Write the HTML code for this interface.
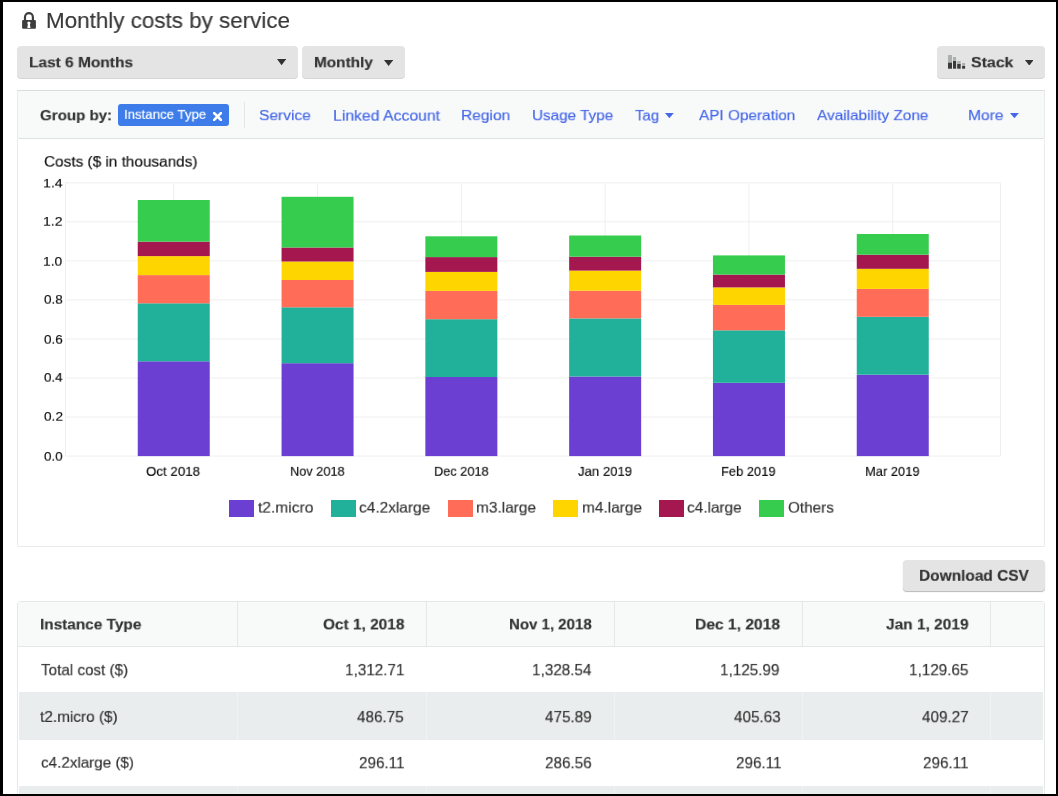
<!DOCTYPE html>
<html><head><meta charset="utf-8"><style>
html,body{margin:0;padding:0;}
body{width:1058px;height:796px;background:#000;position:relative;overflow:hidden;font-family:"Liberation Sans",sans-serif;}
#pg{position:absolute;left:3px;top:2px;width:1053px;height:792px;background:#fff;overflow:hidden;}
#wrap{position:absolute;left:-3px;top:-2px;width:1058px;height:796px;}
.t{position:absolute;line-height:1;white-space:nowrap;transform-origin:0 0;will-change:transform;-webkit-text-stroke:0.18px currentColor;}
</style></head><body><div id="pg"><div id="wrap">
<svg style="position:absolute;left:18px;top:8px" width="22" height="24" viewBox="0 0 22 24">
<path d="M7 12.5 V9.15 A3.95 3.95 0 0 1 14.9 9.15 V12.5" fill="none" stroke="#3d3d3d" stroke-width="2.2"/>
<rect x="4.1" y="12" width="13.8" height="8.8" rx="1" fill="#3d3d3d"/>
<circle cx="10.9" cy="15.0" r="1.6" fill="#fff"/><path d="M10.0 15.5 L11.8 15.5 L12.5 19.9 L9.3 19.9 Z" fill="#fff"/>
</svg>
<div class="t" id="t0" style="left:46.06px;top:10.26px;font-size:22.5px;color:#383838;transform:scale(0.9959,1.0028);">Monthly costs by service</div>
<div style="position:absolute;left:17px;top:46px;width:281px;height:32px;background:#e4e4e4;border-radius:4px;box-shadow:0 1px 0 #d3d6d6;"></div>
<div class="t" id="t1" style="left:29.06px;top:55.98px;font-size:16.0px;color:#333;font-weight:bold;transform:scale(0.9666,0.8709);">Last 6 Months</div>
<svg style="position:absolute;left:276.8px;top:59.4px" width="9.20" height="6.20" viewBox="0 0 9.20 6.20"><path d="M0 0 L9.20 0 L4.60 6.20 Z" fill="#333"/></svg>
<div style="position:absolute;left:302px;top:46px;width:103px;height:32px;background:#e4e4e4;border-radius:4px;box-shadow:0 1px 0 #d3d6d6;"></div>
<div class="t" id="t2" style="left:314.17px;top:55.98px;font-size:16.0px;color:#333;font-weight:bold;transform:scale(0.9584,0.8709);">Monthly</div>
<svg style="position:absolute;left:383.6px;top:59.6px" width="9.20" height="6.00" viewBox="0 0 9.20 6.00"><path d="M0 0 L9.20 0 L4.60 6.00 Z" fill="#333"/></svg>
<div style="position:absolute;left:937px;top:46px;width:108px;height:32px;background:#e4e4e4;border-radius:4px;box-shadow:0 1px 0 #d3d6d6;"></div>
<svg style="position:absolute;left:948px;top:55px" width="18" height="14" viewBox="0 0 18 14">
<rect x="0" y="0" width="4" height="7.6" fill="#adb1ae"/><rect x="0" y="7.6" width="4" height="6.1" fill="#3a3a3a"/>
<rect x="5" y="2" width="3.1" height="4" fill="#adb1ae"/><rect x="5" y="6" width="3.1" height="7.7" fill="#3a3a3a"/>
<rect x="9.2" y="6" width="3.5" height="3" fill="#adb1ae"/><rect x="9.2" y="9" width="3.5" height="4.7" fill="#3a3a3a"/>
<rect x="14.1" y="8" width="3" height="3" fill="#adb1ae"/><rect x="14.1" y="11" width="3" height="2.7" fill="#3a3a3a"/>
</svg>
<div class="t" id="t3" style="left:970.81px;top:56.09px;font-size:16.0px;color:#333;font-weight:bold;transform:scale(0.9917,0.8705);">Stack</div>
<svg style="position:absolute;left:1024.6px;top:59.5px" width="8.60" height="5.60" viewBox="0 0 8.60 5.60"><path d="M0 0 L8.60 0 L4.30 5.60 Z" fill="#333"/></svg>
<div style="position:absolute;left:17px;top:90px;width:1028px;height:48px;background:#f8f9f9;border:1px solid #e9ebeb;border-top-color:#d9dddd;border-bottom:none;box-sizing:border-box;"></div>
<div style="position:absolute;left:18px;top:138px;width:1026px;height:1px;background:#dde1e1;"></div>
<div class="t" id="t4" style="left:40.04px;top:108.81px;font-size:16.0px;color:#333;font-weight:bold;transform:scale(0.9427,0.8692);">Group by:</div>
<div style="position:absolute;left:118px;top:104px;width:111px;height:22px;background:#3d7ce9;border-radius:3px;"></div>
<div class="t" id="t5" style="left:124.47px;top:108.14px;font-size:14.5px;color:#fff;transform:scale(0.9119,0.9040);">Instance Type</div>
<svg style="position:absolute;left:213px;top:112px" width="9" height="9" viewBox="0 0 9 9"><path d="M1 1 L8 8 M8 1 L1 8" stroke="#fff" stroke-width="2.6" stroke-linecap="square"/></svg>
<div style="position:absolute;left:244px;top:102px;width:1px;height:26px;background:#e3e6e6;"></div>
<div class="t" id="t6" style="left:259.37px;top:109.36px;font-size:16.0px;color:#4567e8;transform:scale(0.9694,0.8617);">Service</div>
<div class="t" id="t7" style="left:332.90px;top:108.66px;font-size:16.0px;color:#4567e8;transform:scale(0.9858,0.8971);">Linked Account</div>
<div class="t" id="t8" style="left:461.43px;top:109.36px;font-size:16.0px;color:#4567e8;transform:scale(0.9701,0.8617);">Region</div>
<div class="t" id="t9" style="left:531.53px;top:108.91px;font-size:16.0px;color:#4567e8;transform:scale(0.9540,0.8655);">Usage Type</div>
<div class="t" id="t10" style="left:635.26px;top:108.76px;font-size:16.0px;color:#4567e8;transform:scale(0.9310,0.8826);">Tag</div>
<div class="t" id="t11" style="left:699.00px;top:108.97px;font-size:16.0px;color:#4567e8;transform:scale(0.9582,0.8628);">API Operation</div>
<div class="t" id="t12" style="left:816.83px;top:109.02px;font-size:16.0px;color:#4567e8;transform:scale(0.9585,0.8621);">Availability Zone</div>
<div class="t" id="t13" style="left:967.81px;top:109.42px;font-size:16.0px;color:#4567e8;transform:scale(0.9753,0.8607);">More</div>
<svg style="position:absolute;left:665px;top:112.9px" width="8.80" height="5.20" viewBox="0 0 8.80 5.20"><path d="M0 0 L8.80 0 L4.40 5.20 Z" fill="#4567e8"/></svg>
<svg style="position:absolute;left:1010.2px;top:112.9px" width="8.90" height="5.20" viewBox="0 0 8.90 5.20"><path d="M0 0 L8.90 0 L4.45 5.20 Z" fill="#4567e8"/></svg>
<div style="position:absolute;left:17px;top:139px;width:1028px;height:408px;background:#fff;border:1px solid #eaecec;border-top:none;box-sizing:border-box;border-radius:0 0 2px 2px;"></div>
<div class="t" id="t14" style="left:43.64px;top:154.77px;font-size:16.0px;color:#111;transform:scale(0.9588,0.8966);">Costs ($ in thousands)</div>
<svg style="position:absolute;left:0;top:0" width="1058" height="796"><line x1="65.5" y1="182.80" x2="1000.5" y2="182.80" stroke="#efefef" stroke-width="1"/><line x1="65.5" y1="221.84" x2="1000.5" y2="221.84" stroke="#efefef" stroke-width="1"/><line x1="65.5" y1="260.88" x2="1000.5" y2="260.88" stroke="#efefef" stroke-width="1"/><line x1="65.5" y1="299.92" x2="1000.5" y2="299.92" stroke="#efefef" stroke-width="1"/><line x1="65.5" y1="338.96" x2="1000.5" y2="338.96" stroke="#efefef" stroke-width="1"/><line x1="65.5" y1="378.00" x2="1000.5" y2="378.00" stroke="#efefef" stroke-width="1"/><line x1="65.5" y1="417.04" x2="1000.5" y2="417.04" stroke="#efefef" stroke-width="1"/><line x1="65.5" y1="456.08" x2="1000.5" y2="456.08" stroke="#efefef" stroke-width="1"/><line x1="65.50" y1="182.8" x2="65.50" y2="456.08" stroke="#efefef" stroke-width="1"/><line x1="173.75" y1="182.8" x2="173.75" y2="456.08" stroke="#efefef" stroke-width="1"/><line x1="317.55" y1="182.8" x2="317.55" y2="456.08" stroke="#efefef" stroke-width="1"/><line x1="461.35" y1="182.8" x2="461.35" y2="456.08" stroke="#efefef" stroke-width="1"/><line x1="605.15" y1="182.8" x2="605.15" y2="456.08" stroke="#efefef" stroke-width="1"/><line x1="748.95" y1="182.8" x2="748.95" y2="456.08" stroke="#efefef" stroke-width="1"/><line x1="892.75" y1="182.8" x2="892.75" y2="456.08" stroke="#efefef" stroke-width="1"/><line x1="1000.50" y1="182.8" x2="1000.50" y2="456.08" stroke="#efefef" stroke-width="1"/><rect x="137.75" y="361.30" width="72" height="94.80" fill="#6a3fd1"/><rect x="137.75" y="303.30" width="72" height="58.00" fill="#21b19b"/><rect x="137.75" y="275.10" width="72" height="28.20" fill="#ff6d59"/><rect x="137.75" y="256.10" width="72" height="19.00" fill="#ffd500"/><rect x="137.75" y="241.60" width="72" height="14.50" fill="#a4174f"/><rect x="137.75" y="200.00" width="72" height="41.60" fill="#36cd4f"/><rect x="281.55" y="363.20" width="72" height="92.90" fill="#6a3fd1"/><rect x="281.55" y="307.30" width="72" height="55.90" fill="#21b19b"/><rect x="281.55" y="280.00" width="72" height="27.30" fill="#ff6d59"/><rect x="281.55" y="261.50" width="72" height="18.50" fill="#ffd500"/><rect x="281.55" y="247.50" width="72" height="14.00" fill="#a4174f"/><rect x="281.55" y="196.80" width="72" height="50.70" fill="#36cd4f"/><rect x="425.35" y="377.00" width="72" height="79.10" fill="#6a3fd1"/><rect x="425.35" y="319.20" width="72" height="57.80" fill="#21b19b"/><rect x="425.35" y="290.90" width="72" height="28.30" fill="#ff6d59"/><rect x="425.35" y="271.90" width="72" height="19.00" fill="#ffd500"/><rect x="425.35" y="257.10" width="72" height="14.80" fill="#a4174f"/><rect x="425.35" y="236.30" width="72" height="20.80" fill="#36cd4f"/><rect x="569.15" y="376.50" width="72" height="79.60" fill="#6a3fd1"/><rect x="569.15" y="318.40" width="72" height="58.10" fill="#21b19b"/><rect x="569.15" y="290.70" width="72" height="27.70" fill="#ff6d59"/><rect x="569.15" y="270.60" width="72" height="20.10" fill="#ffd500"/><rect x="569.15" y="256.70" width="72" height="13.90" fill="#a4174f"/><rect x="569.15" y="235.50" width="72" height="21.20" fill="#36cd4f"/><rect x="712.95" y="382.80" width="72" height="73.30" fill="#6a3fd1"/><rect x="712.95" y="330.30" width="72" height="52.50" fill="#21b19b"/><rect x="712.95" y="304.90" width="72" height="25.40" fill="#ff6d59"/><rect x="712.95" y="287.40" width="72" height="17.50" fill="#ffd500"/><rect x="712.95" y="274.60" width="72" height="12.80" fill="#a4174f"/><rect x="712.95" y="255.40" width="72" height="19.20" fill="#36cd4f"/><rect x="856.75" y="374.70" width="72" height="81.40" fill="#6a3fd1"/><rect x="856.75" y="316.80" width="72" height="57.90" fill="#21b19b"/><rect x="856.75" y="288.90" width="72" height="27.90" fill="#ff6d59"/><rect x="856.75" y="268.80" width="72" height="20.10" fill="#ffd500"/><rect x="856.75" y="254.70" width="72" height="14.10" fill="#a4174f"/><rect x="856.75" y="234.00" width="72" height="20.70" fill="#36cd4f"/></svg>
<div class="t" id="t15" style="left:43.34px;top:176.58px;font-size:13.5px;color:#111;transform:scale(1.0490,0.9455);">1.4</div>
<div class="t" id="t16" style="left:43.33px;top:215.16px;font-size:13.5px;color:#111;transform:scale(1.0426,0.9696);">1.2</div>
<div class="t" id="t17" style="left:43.41px;top:254.52px;font-size:13.5px;color:#111;transform:scale(1.0202,0.9696);">1.0</div>
<div class="t" id="t18" style="left:44.47px;top:293.38px;font-size:13.5px;color:#111;transform:scale(1.0025,0.9675);">0.8</div>
<div class="t" id="t19" style="left:44.45px;top:332.71px;font-size:13.5px;color:#111;transform:scale(1.0017,0.9686);">0.6</div>
<div class="t" id="t20" style="left:44.47px;top:371.13px;font-size:13.5px;color:#111;transform:scale(0.9835,0.9657);">0.4</div>
<div class="t" id="t21" style="left:44.46px;top:410.43px;font-size:13.5px;color:#111;transform:scale(1.0099,0.9686);">0.2</div>
<div class="t" id="t22" style="left:44.45px;top:449.83px;font-size:13.5px;color:#111;transform:scale(0.9895,0.9666);">0.0</div>
<div class="t" id="t23" style="left:146.36px;top:464.92px;font-size:14.5px;color:#111;transform:scale(0.9182,0.9043);">Oct 2018</div>
<div class="t" id="t24" style="left:289.91px;top:465.47px;font-size:14.5px;color:#111;transform:scale(0.8794,0.8960);">Nov 2018</div>
<div class="t" id="t25" style="left:434.01px;top:465.47px;font-size:14.5px;color:#111;transform:scale(0.8794,0.8960);">Dec 2018</div>
<div class="t" id="t26" style="left:578.33px;top:464.89px;font-size:14.5px;color:#111;transform:scale(0.9067,0.9040);">Jan 2019</div>
<div class="t" id="t27" style="left:721.10px;top:464.96px;font-size:14.5px;color:#111;transform:scale(0.8900,0.9128);">Feb 2019</div>
<div class="t" id="t28" style="left:865.33px;top:464.96px;font-size:14.5px;color:#111;transform:scale(0.8900,0.9128);">Mar 2019</div>
<div style="position:absolute;left:229px;top:500px;width:25px;height:17px;background:#6a3fd1;"></div>
<div class="t" id="t29" style="left:258.36px;top:499.83px;font-size:16.5px;color:#333;transform:scale(0.9441,0.8995);">t2.micro</div>
<div style="position:absolute;left:331.3px;top:500px;width:25.0px;height:17px;background:#21b19b;"></div>
<div class="t" id="t30" style="left:358.91px;top:499.87px;font-size:16.5px;color:#333;transform:scale(0.9356,0.8971);">c4.2xlarge</div>
<div style="position:absolute;left:448.4px;top:500px;width:25.0px;height:17px;background:#ff6d59;"></div>
<div class="t" id="t31" style="left:475.71px;top:499.87px;font-size:16.5px;color:#333;transform:scale(0.9356,0.8971);">m3.large</div>
<div style="position:absolute;left:553px;top:500px;width:25px;height:17px;background:#ffd500;"></div>
<div class="t" id="t32" style="left:581.56px;top:499.87px;font-size:16.5px;color:#333;transform:scale(0.9356,0.8971);">m4.large</div>
<div style="position:absolute;left:658.6px;top:500px;width:25.0px;height:17px;background:#a4174f;"></div>
<div class="t" id="t33" style="left:687.01px;top:499.87px;font-size:16.5px;color:#333;transform:scale(0.9317,0.8971);">c4.large</div>
<div style="position:absolute;left:759.3px;top:500px;width:25.0px;height:17px;background:#36cd4f;"></div>
<div class="t" id="t34" style="left:788.06px;top:499.77px;font-size:16.5px;color:#333;transform:scale(0.9264,0.9041);">Others</div>
<div style="position:absolute;left:902.5px;top:560px;width:142.5px;height:30.5px;background:#e4e4e4;border-radius:4px;box-shadow:0 1px 1px rgba(0,0,0,0.28);"></div>
<div class="t" id="t35" style="left:919.10px;top:567.79px;font-size:17.0px;color:#333;font-weight:bold;transform:scale(0.9088,0.9092);">Download CSV</div>
<div style="position:absolute;left:17px;top:601px;width:1028px;height:199px;background:#fff;border:1px solid #e6e8e8;box-sizing:border-box;border-radius:3px 3px 0 0;"></div>
<div style="position:absolute;left:18px;top:602px;width:1026px;height:44px;background:#f8f9f9;"></div>
<div style="position:absolute;left:18px;top:646px;width:1026px;height:1px;background:#e6e8e8;"></div>
<div style="position:absolute;left:19px;top:692px;width:1024px;height:48px;background:#eaeded;"></div>
<div style="position:absolute;left:19px;top:786px;width:1024px;height:14px;background:#eaeded;"></div>
<div style="position:absolute;left:237px;top:602px;width:1px;height:44px;background:#e6e8e8;"></div>
<div style="position:absolute;left:237px;top:692px;width:1px;height:48px;background:#f1f3f3;"></div>
<div style="position:absolute;left:237px;top:786px;width:1px;height:14px;background:#f1f3f3;"></div>
<div style="position:absolute;left:426px;top:602px;width:1px;height:44px;background:#e6e8e8;"></div>
<div style="position:absolute;left:426px;top:692px;width:1px;height:48px;background:#f1f3f3;"></div>
<div style="position:absolute;left:426px;top:786px;width:1px;height:14px;background:#f1f3f3;"></div>
<div style="position:absolute;left:614px;top:602px;width:1px;height:44px;background:#e6e8e8;"></div>
<div style="position:absolute;left:614px;top:692px;width:1px;height:48px;background:#f1f3f3;"></div>
<div style="position:absolute;left:614px;top:786px;width:1px;height:14px;background:#f1f3f3;"></div>
<div style="position:absolute;left:802px;top:602px;width:1px;height:44px;background:#e6e8e8;"></div>
<div style="position:absolute;left:802px;top:692px;width:1px;height:48px;background:#f1f3f3;"></div>
<div style="position:absolute;left:802px;top:786px;width:1px;height:14px;background:#f1f3f3;"></div>
<div style="position:absolute;left:990px;top:602px;width:1px;height:44px;background:#e6e8e8;"></div>
<div style="position:absolute;left:990px;top:692px;width:1px;height:48px;background:#f1f3f3;"></div>
<div style="position:absolute;left:990px;top:786px;width:1px;height:14px;background:#f1f3f3;"></div>
<div class="t" id="t36" style="left:39.73px;top:617.17px;font-size:16.5px;color:#333;font-weight:bold;transform:scale(0.9309,0.8858);">Instance Type</div>
<div class="t" id="t37" style="left:322.60px;top:617.17px;font-size:16.5px;color:#333;font-weight:bold;transform:scale(0.9344,0.8858);">Oct 1, 2018</div>
<div class="t" id="t38" style="left:509.33px;top:617.18px;font-size:16.5px;color:#333;font-weight:bold;transform:scale(0.9101,0.8849);">Nov 1, 2018</div>
<div class="t" id="t39" style="left:695.33px;top:617.17px;font-size:16.5px;color:#333;font-weight:bold;transform:scale(0.9461,0.8858);">Dec 1, 2018</div>
<div class="t" id="t40" style="left:886.33px;top:617.17px;font-size:16.5px;color:#333;font-weight:bold;transform:scale(0.9372,0.8858);">Jan 1, 2019</div>
<div class="t" id="t41" style="left:41.09px;top:662.32px;font-size:17.0px;color:#333;transform:scale(0.8946,0.9494);">Total cost ($)</div>
<div class="t" id="t42" style="left:344.87px;top:662.34px;font-size:17.0px;color:#333;transform:scale(0.8976,0.9488);">1,312.71</div>
<div class="t" id="t43" style="left:532.07px;top:662.34px;font-size:17.0px;color:#333;transform:scale(0.8976,0.9488);">1,328.54</div>
<div class="t" id="t44" style="left:720.42px;top:662.34px;font-size:17.0px;color:#333;transform:scale(0.8976,0.9488);">1,125.99</div>
<div class="t" id="t45" style="left:909.09px;top:662.34px;font-size:17.0px;color:#333;transform:scale(0.8976,0.9488);">1,129.65</div>
<div class="t" id="t46" style="left:40.38px;top:709.13px;font-size:17.0px;color:#333;transform:scale(0.9040,0.9241);">t2.micro ($)</div>
<div class="t" id="t47" style="left:357.09px;top:708.95px;font-size:17.0px;color:#333;transform:scale(0.8976,0.9488);">486.75</div>
<div class="t" id="t48" style="left:545.47px;top:708.95px;font-size:17.0px;color:#333;transform:scale(0.8976,0.9488);">475.89</div>
<div class="t" id="t49" style="left:733.79px;top:708.95px;font-size:17.0px;color:#333;transform:scale(0.8976,0.9488);">405.63</div>
<div class="t" id="t50" style="left:921.93px;top:708.95px;font-size:17.0px;color:#333;transform:scale(0.8976,0.9488);">409.27</div>
<div class="t" id="t51" style="left:40.64px;top:755.22px;font-size:17.0px;color:#333;transform:scale(0.8942,0.9040);">c4.2xlarge ($)</div>
<div class="t" id="t52" style="left:359.06px;top:755.45px;font-size:17.0px;color:#333;transform:scale(0.8976,0.9488);">296.11</div>
<div class="t" id="t53" style="left:545.31px;top:755.45px;font-size:17.0px;color:#333;transform:scale(0.8976,0.9488);">286.56</div>
<div class="t" id="t54" style="left:735.63px;top:755.45px;font-size:17.0px;color:#333;transform:scale(0.8976,0.9488);">296.11</div>
<div class="t" id="t55" style="left:923.41px;top:755.45px;font-size:17.0px;color:#333;transform:scale(0.8976,0.9488);">296.11</div>
</div></div></body></html>
